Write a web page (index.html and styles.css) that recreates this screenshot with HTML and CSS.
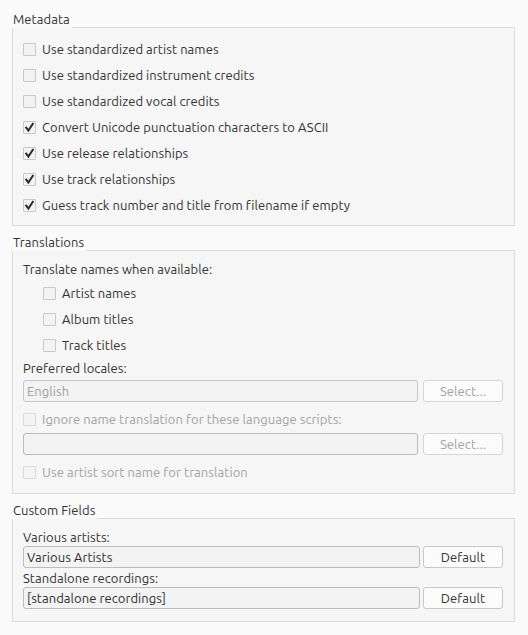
FILE: index.html
```html
<!DOCTYPE html>
<html>
<head>
<meta charset="utf-8">
<link rel="stylesheet" href="styles.css">
</head>
<body>
<div class="page">
  <section class="group">
    <div class="group-head"><span class="group-title">Metadata</span><span class="group-line"></span></div>
    <div class="group-body body-meta">
      <div class="check-row"><span class="box"></span><span>Use standardized artist names</span></div>
      <div class="check-row"><span class="box"></span><span>Use standardized instrument credits</span></div>
      <div class="check-row"><span class="box"></span><span>Use standardized vocal credits</span></div>
      <div class="check-row"><span class="box checked"><svg viewBox="0 0 13 13" width="13" height="13"><path d="M3.2 6.6 L5.4 9.6 L9.8 2.8" fill="none" stroke="#2a2a2a" stroke-width="2" stroke-linecap="square"/></svg></span><span>Convert Unicode punctuation characters to ASCII</span></div>
      <div class="check-row"><span class="box checked"><svg viewBox="0 0 13 13" width="13" height="13"><path d="M3.2 6.6 L5.4 9.6 L9.8 2.8" fill="none" stroke="#2a2a2a" stroke-width="2" stroke-linecap="square"/></svg></span><span>Use release relationships</span></div>
      <div class="check-row"><span class="box checked"><svg viewBox="0 0 13 13" width="13" height="13"><path d="M3.2 6.6 L5.4 9.6 L9.8 2.8" fill="none" stroke="#2a2a2a" stroke-width="2" stroke-linecap="square"/></svg></span><span>Use track relationships</span></div>
      <div class="check-row"><span class="box checked"><svg viewBox="0 0 13 13" width="13" height="13"><path d="M3.2 6.6 L5.4 9.6 L9.8 2.8" fill="none" stroke="#2a2a2a" stroke-width="2" stroke-linecap="square"/></svg></span><span>Guess track number and title from filename if empty</span></div>
    </div>
  </section>

  <section class="group">
    <div class="group-head"><span class="group-title">Translations</span><span class="group-line"></span></div>
    <div class="group-body body-trans">
      <div class="label-row tall">Translate names when available:</div>
      <div class="check-row indent"><span class="box"></span><span>Artist names</span></div>
      <div class="check-row indent"><span class="box"></span><span>Album titles</span></div>
      <div class="check-row indent"><span class="box"></span><span>Track titles</span></div>
      <div class="label-row">Preferred locales:</div>
      <div class="field-row gap5 mt2">
        <div class="input disabled">English</div>
        <div class="button disabled">Select...</div>
      </div>
      <div class="check-row disabled mt4"><span class="box"></span><span>Ignore name translation for these language scripts:</span></div>
      <div class="field-row gap5 mt1">
        <div class="input"></div>
        <div class="button disabled">Select...</div>
      </div>
      <div class="check-row disabled mt4"><span class="box"></span><span>Use artist sort name for translation</span></div>
    </div>
  </section>

  <section class="group">
    <div class="group-head"><span class="group-title">Custom Fields</span><span class="group-line"></span></div>
    <div class="group-body body-custom">
      <div class="label-row short">Various artists:</div>
      <div class="field-row gap3">
        <div class="input">Various Artists</div>
        <div class="button">Default</div>
      </div>
      <div class="label-row short mt1">Standalone recordings:</div>
      <div class="field-row gap3">
        <div class="input">[standalone recordings]</div>
        <div class="button">Default</div>
      </div>
    </div>
  </section>
</div>
</body>
</html>
```

FILE: styles.css
```css
html, body {
  margin: 0;
  padding: 0;
  background: #fafafa;
}

body {
  font-family: "Ubuntu", "Lato", "Liberation Sans", sans-serif;
  font-size: 13px;
  letter-spacing: 0.06px;
  color: #333333;
}

.page {
  padding: 11px 13px 0 12px;
  display: flex;
  flex-direction: column;
  gap: 8px;
}

.group-head {
  display: flex;
  height: 17px;
}

.group-title {
  line-height: 16px;
  padding: 0 2px 0 1px;
}

.group-line {
  flex: 1;
  border-bottom: 1px solid #dcdcdc;
}

.group-body {
  border: 1px solid #dcdcdc;
  border-top: none;
  background: #f6f6f6;
  padding: 0 11px 0 10px;
  display: flex;
  flex-direction: column;
}

.body-meta {
  padding-top: 8px;
  padding-bottom: 7px;
}

.body-trans {
  padding-top: 8px;
  padding-bottom: 8px;
}

.body-custom {
  padding-top: 9px;
  padding-bottom: 12px;
}

.check-row {
  display: flex;
  align-items: center;
  height: 26px;
  gap: 6px;
}

.check-row.indent {
  padding-left: 20px;
}

.box {
  width: 13px;
  height: 13px;
  box-sizing: border-box;
  border: 1px solid #c9c9c9;
  border-radius: 1px;
  background: #f3f3f3;
  flex: none;
  position: relative;
}

.box svg {
  position: absolute;
  left: -1px;
  top: -1px;
}

.check-row.disabled {
  color: #a3a3a3;
}

.check-row.disabled .box {
  border-color: #dadada;
  background: #f4f4f4;
}

.label-row {
  height: 20px;
  line-height: 20px;
}

.label-row.tall {
  height: 21px;
  line-height: 20px;
}

.label-row.short {
  height: 18px;
  line-height: 18px;
}

.field-row {
  display: flex;
  height: 22px;
}

.gap5 { gap: 5px; }
.gap3 { gap: 3px; }
.mt1 { margin-top: 1px; }
.mt2 { margin-top: 2px; }
.mt4 { margin-top: 4px; }

.input {
  flex: 1;
  box-sizing: border-box;
  height: 22px;
  border: 1px solid #bcbcbc;
  border-radius: 3px;
  background: #f3f3f3;
  padding: 0 3px;
  line-height: 20px;
  color: #2e2e2e;
}

.input.disabled {
  color: #a0a0a0;
  border-color: #c6c6c6;
}

.button {
  width: 80px;
  flex: none;
  box-sizing: border-box;
  height: 22px;
  border: 1px solid #c8c8c8;
  border-radius: 3px;
  background: #fbfbfb;
  text-align: center;
  line-height: 20px;
  color: #333333;
}

.button.disabled {
  color: #a3a3a3;
  border-color: #d6d6d6;
}
```
